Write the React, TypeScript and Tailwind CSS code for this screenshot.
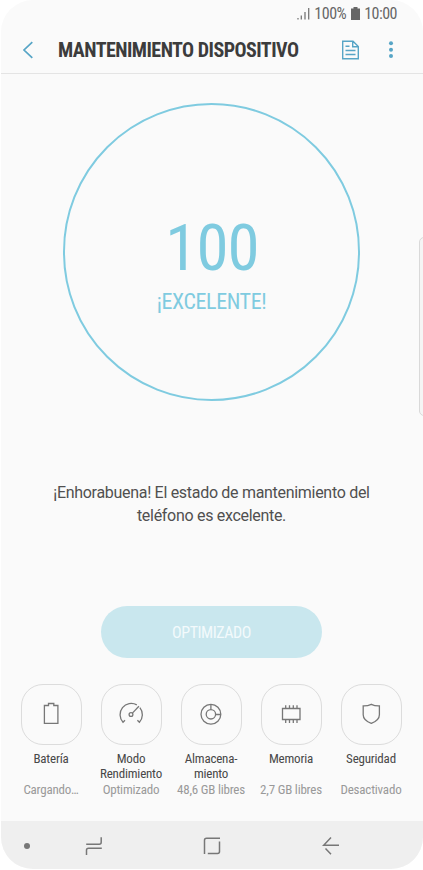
import type { ReactNode } from 'react'

type Tile = {
  label: string[]
  status: string
  icon: ReactNode
}

const tiles: Tile[] = [
  {
    label: ['Batería'],
    status: 'Cargando…',
    icon: <path d="M8.4 5.5H12.5V3.5H17.8V5.5H21.9V23.3H8.4Z" />,
  },
  {
    label: ['Modo', 'Rendimiento'],
    status: 'Optimizado',
    icon: (
      <>
        <path d="M9 20.2L7 22.2A11.2 11.2 0 0 1 20.8 4.9M23.9 7.6A11.2 11.2 0 0 1 23.4 22.2L21.4 20.2" />
        <circle cx="15" cy="14.5" r="1.9" />
        <path d="M16.4 13.1L22.9 6.3" />
      </>
    ),
  },
  {
    label: ['Almacena-', 'miento'],
    status: '48,6 GB libres',
    icon: (
      <>
        <circle cx="14.9" cy="14.3" r="9.9" />
        <circle cx="14.9" cy="14.3" r="4.7" />
        <path d="M14.9 4.4V9.6M19.6 14.5H24.8" />
      </>
    ),
  },
  {
    label: ['Memoria'],
    status: '2,7 GB libres',
    icon: (
      <>
        <path d="M6.5 8.5H24V19.5H6.5Z" />
        <path d="M9.7 8.5V5.2M13.5 8.5V5.2M17.3 8.5V5.2M21 8.5V5.2M9.7 19.5V23M13.5 19.5V23M17.3 19.5V23M21 19.5V23" />
      </>
    ),
  },
  {
    label: ['Seguridad'],
    status: 'Desactivado',
    icon: <path d="M15.3 4.3C12.8 5.5 10.1 6 7.2 5.9V14.8C7.2 19 10.3 21.5 15.3 23.4C20.3 21.5 23.4 19 23.4 14.8V5.9C20.5 6 17.8 5.5 15.3 4.3Z" />,
  },
]

function StatusBar() {
  return (
    <div className="flex h-[27px] items-center justify-end pr-[26px] text-[16px] tracking-[-0.5px] text-[#666]">
      <svg width="13" height="13" viewBox="0 0 13 13" className="mr-1 mb-px" fill="none" stroke="#777" strokeWidth="1.3">
        <path d="M1 12.5V11M4.3 12.5V8.5M8 12.5V5M11.7 12.5V1" />
      </svg>
      <span>100%</span>
      <svg width="9" height="13" viewBox="0 0 9 13" className="mr-1 mb-px ml-[5px]" fill="#666">
        <path d="M0 1.5H2.5V0H6.5V1.5H9V13H0Z" />
      </svg>
      <span>10:00</span>
    </div>
  )
}

function Header() {
  return (
    <header className="flex h-[47px] items-center border-b border-[#e4e4e4] pb-px pl-[21px]">
      <svg width="12" height="18" viewBox="0 0 12 18" fill="none" stroke="#57a5c6" strokeWidth="1.7" aria-label="Atrás">
        <path d="M10.3 1.2L2 9L10.3 16.8" />
      </svg>
      <h1 className="ml-6 w-[283px] pt-px text-[20px] font-bold tracking-[-0.53px] whitespace-nowrap text-[#3c3c3c]">
        MANTENIMIENTO DISPOSITIVO
      </h1>
      <svg width="19" height="20" viewBox="0 0 19 20" fill="none" stroke="#57a5c6" strokeWidth="1.4">
        <path d="M1.7 1.2H12L17.3 6.5V18.8H1.7ZM11.7 1.2V6.7H17.3M4.5 6.2H8.5M4.5 10.5H14.5M4.5 14.5H14.5" />
      </svg>
      <svg width="6" height="18" viewBox="0 0 6 18" fill="#57a5c6" className="ml-7">
        <circle cx="3" cy="2.3" r="2" />
        <circle cx="3" cy="8.7" r="2" />
        <circle cx="3" cy="15" r="2" />
      </svg>
    </header>
  )
}

function NavBar() {
  return (
    <nav className="flex h-12 items-center bg-[#efefef] pt-px pl-[23px] text-[#777]">
      <span className="size-[6px] rounded-full bg-[#777]" />
      <svg width="18" height="20" viewBox="0 0 18 20" fill="none" stroke="currentColor" strokeWidth="1.5" className="ml-[55px]">
        <path d="M1.2 8.2H14.2Q16.2 8.2 16.2 6.2V1.2M1.5 19V14Q1.5 12.2 3.5 12.2H16.8" />
      </svg>
      <svg width="18" height="18" viewBox="0 0 18 18" fill="none" stroke="currentColor" strokeWidth="1.5" className="ml-[100px]">
        <path d="M1.5 17V3.2Q1.5 1.2 3.5 1.2H17M16.5 4.5V14.5Q16.5 16.5 14.5 16.5H4.8" />
      </svg>
      <svg width="18" height="20" viewBox="0 0 18 20" fill="none" stroke="currentColor" strokeWidth="1.5" className="ml-[101px]">
        <path d="M9 1.5L1.7 9.2H17M3.5 12.5L9 18.3" />
      </svg>
    </nav>
  )
}

export default function App() {
  return (
    <div className="h-[870px] w-[423px] bg-white pl-px font-['Roboto_Condensed','Roboto',sans-serif] [font-stretch:75%]">
      <div className="relative flex h-[869px] flex-col overflow-hidden rounded-[32px] bg-[#fafafa]">
        <StatusBar />
        <Header />
        <main className="-ml-px flex flex-1 flex-col items-center">
          <div className="mt-[29px] flex h-[298px] w-[297px] flex-col items-center rounded-full border-2 border-[#7fcbe0] pt-[111px] text-[#7fcbe0]">
            <p className="pl-px text-[65px] leading-[65px] tracking-[-1px]">100</p>
            <p className="mt-[8px] text-[22px] leading-[26px] tracking-[-0.4px]">¡EXCELENTE!</p>
          </div>
          <p className="mt-[80px] text-center text-[16px] leading-[23px] tracking-[-0.3px] [font-stretch:100%] font-['Roboto',sans-serif] text-[#505050]">
            ¡Enhorabuena! El estado de mantenimiento del
            <br />
            teléfono es excelente.
          </p>
          <button className="mt-[79px] h-[52px] w-[221px] rounded-full bg-[#c9e7ee] pt-px text-[16px] tracking-[-0.45px] text-[#f3fafc]">
            OPTIMIZADO
          </button>
          <div className="mt-[26px] mr-px grid grid-cols-5">
            {tiles.map((tile) => (
              <div
                key={tile.status}
                className="flex w-20 flex-col items-center text-center text-[13px] leading-[15px] tracking-[-0.2px]"
              >
                <div className="flex size-[61px] items-center justify-center rounded-[22px] border border-[#dcdcdc]">
                  <svg width="31" height="29" viewBox="0 0 31 29" fill="none" stroke="#777" strokeWidth="1.3">
                    {tile.icon}
                  </svg>
                </div>
                <p className="mt-[6px] h-[31px] text-[#484848]">
                  {tile.label.map((line) => (
                    <span key={line} className="block">{line}</span>
                  ))}
                </p>
                <p className="whitespace-nowrap text-[#999]">{tile.status}</p>
              </div>
            ))}
          </div>
        </main>
        <NavBar />
        {/* edge panel handle */}
        <div className="absolute top-[237px] -right-2 h-[179px] w-3 rounded-[5px] border border-[#d9d9d9] bg-[#f5f5f5]" />
      </div>
    </div>
  )
}
